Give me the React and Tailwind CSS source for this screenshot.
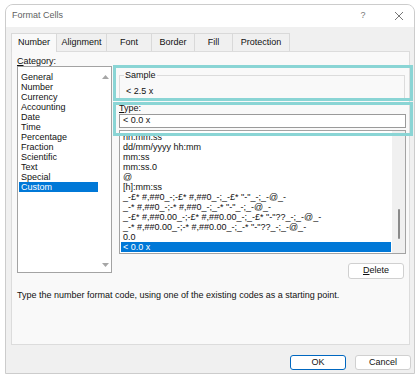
import React from 'react';

const tabs = [
  { label: 'Number', w: 'w-[46px]', active: true },
  { label: 'Alignment', w: 'w-[50px]' },
  { label: 'Font', w: 'w-[45px]' },
  { label: 'Border', w: 'w-[43px]' },
  { label: 'Fill', w: 'w-[38px]' },
  { label: 'Protection', w: 'w-[57px]' },
];

const categories = [
  'General', 'Number', 'Currency', 'Accounting', 'Date', 'Time',
  'Percentage', 'Fraction', 'Scientific', 'Text', 'Special', 'Custom',
];

const formats = [
  'hh:mm:ss',
  'dd/mm/yyyy hh:mm',
  'mm:ss',
  'mm:ss.0',
  '@',
  '[h]:mm:ss',
  '_-£* #,##0_-;-£* #,##0_-;_-£* "-"_-;_-@_-',
  '_-* #,##0_-;-* #,##0_-;_-* "-"_-;_-@_-',
  '_-£* #,##0.00_-;-£* #,##0.00_-;_-£* "-"??_-;_-@_-',
  '_-* #,##0.00_-;-* #,##0.00_-;_-* "-"??_-;_-@_-',
  '0.0',
  '< 0.0 x',
];

const Arrow = ({ down }) => (
  <svg width="7" height="4" viewBox="0 0 7 4">
    <path d={down ? 'M0 0 L7 0 L3.5 4 Z' : 'M0 4 L7 4 L3.5 0 Z'} fill="#a6a6a6" />
  </svg>
);

const App = () => {
  return (
    <div className="relative w-[420px] h-[377px] bg-white pt-[4px] pl-[5px] font-['Liberation_Sans',Arial,sans-serif] text-[9px] text-[#111]">
      <div className="w-[410px] h-[370px] border border-[#cccccc] rounded-t-[8px] overflow-hidden bg-[#f0f0f0] flex flex-col">
        {/* title bar */}
        <div className="h-[22px] bg-white flex items-center pl-[6px] pr-[10px] text-[#5f5f5f]">
          <span>Format Cells</span>
          <span className="ml-auto w-[12px] text-center text-[#777]">?</span>
          <svg className="ml-[25px]" width="10" height="10" viewBox="0 0 10 10">
            <path d="M1 1 L9 9 M9 1 L1 9" stroke="#777" strokeWidth="1" />
          </svg>
        </div>

        <div className="flex-1 pt-[6px] pl-[5px] pr-[3px]">
          {/* tabs */}
          <div className="flex h-[18px]">
            {tabs.map((t, i) => (
              <div
                key={t.label}
                className={`${t.w} flex items-center justify-center border-t border-r border-[#d9d9d9] ${i === 0 ? 'border-l' : ''} ${t.active ? 'bg-[#f9f9f9] relative z-10 h-[19px]' : 'bg-[#f0f0f0]'}`}
              >
                {t.label}
              </div>
            ))}
          </div>

          {/* panel */}
          <div className="w-[399px] h-[294px] border border-[#dcdcdc] bg-[#f9f9f9] pl-[5px] pt-[4px]">
            <div className="flex gap-[7px]">
              {/* left column */}
              <div className="w-[95px]">
                <div className="h-[10px] leading-[10px]"><span className="underline">C</span>ategory:</div>
                <div className="h-[207px] border border-[#a3a3a3] bg-white flex">
                  <div className="w-[81px] px-[1px] pt-[5px]">
                    {categories.map(c => (
                      <div
                        key={c}
                        className={`h-[10px] leading-[10px] pl-[2px] ${c === 'Custom' ? 'bg-[#0078d7] text-white' : ''}`}
                      >
                        {c}
                      </div>
                    ))}
                  </div>
                  <div className="flex-1 flex flex-col items-center justify-between pt-[8px] pb-[5px]">
                    <Arrow />
                    <Arrow down />
                  </div>
                </div>
              </div>

              {/* right column */}
              <div className="w-[287px] flex flex-col">
                <fieldset className="mt-[14px] w-[286px] border border-[#dcdcdc] pb-[2px]">
                  <legend className="ml-[4px] px-[1px] leading-[10px]">Sample</legend>
                  <div className="mt-[6px] pl-[6px] leading-[10px]">&lt; 2.5 x</div>
                </fieldset>
                <div className="mt-[4px] h-[10px] leading-[10px]"><span className="underline">T</span>ype:</div>
                <div className="mt-[1px] h-[14px] border border-[#9a9a9a] bg-white flex items-center pl-[3px]">
                  &lt; 0.0 x
                </div>
                <div className="mt-[2px] h-[124px] border border-[#a3a3a3] bg-white flex overflow-hidden">
                  <div className="w-[272px] px-[1px] pt-[1px]">
                    {formats.map((f, i) => (
                      <div
                        key={i}
                        className={`h-[10px] leading-[10px] pl-[2px] whitespace-nowrap overflow-hidden ${i === formats.length - 1 ? 'bg-[#0078d7] text-white' : ''}`}
                      >
                        {f}
                      </div>
                    ))}
                  </div>
                  <div className="flex-1 bg-[#f0f0f0] flex justify-center pt-[78px]">
                    <div className="w-[2px] h-[30px] rounded-full bg-[#8a8a8a]" />
                  </div>
                </div>
                <div className="self-end mr-[2px] mt-[9px] w-[56px] h-[16px] rounded-[3px] border border-[#d0d0d0] bg-white flex items-center justify-center">
                  <span><span className="underline">D</span>elete</span>
                </div>
              </div>
            </div>
            <div className="mt-[11px] leading-[10px]">
              Type the number format code, using one of the existing codes as a starting point.
            </div>
          </div>

          {/* dialog buttons */}
          <div className="mt-[10px] flex justify-end gap-[9px]">
            <div className="w-[56px] h-[15px] rounded-[3px] border border-[#0067c0] bg-white flex items-center justify-center">OK</div>
            <div className="w-[56px] h-[15px] rounded-[3px] border border-[#d0d0d0] bg-white flex items-center justify-center">Cancel</div>
          </div>
        </div>
      </div>

      {/* highlight annotations */}
      <div className="absolute left-[113px] top-[65px] w-[300px] h-[36px] border-[3px] border-[#8ad5d5]" />
      <div className="absolute left-[113px] top-[102px] w-[300px] h-[34px] border-[3px] border-[#8ad5d5]" />
    </div>
  );
};

export default App;
